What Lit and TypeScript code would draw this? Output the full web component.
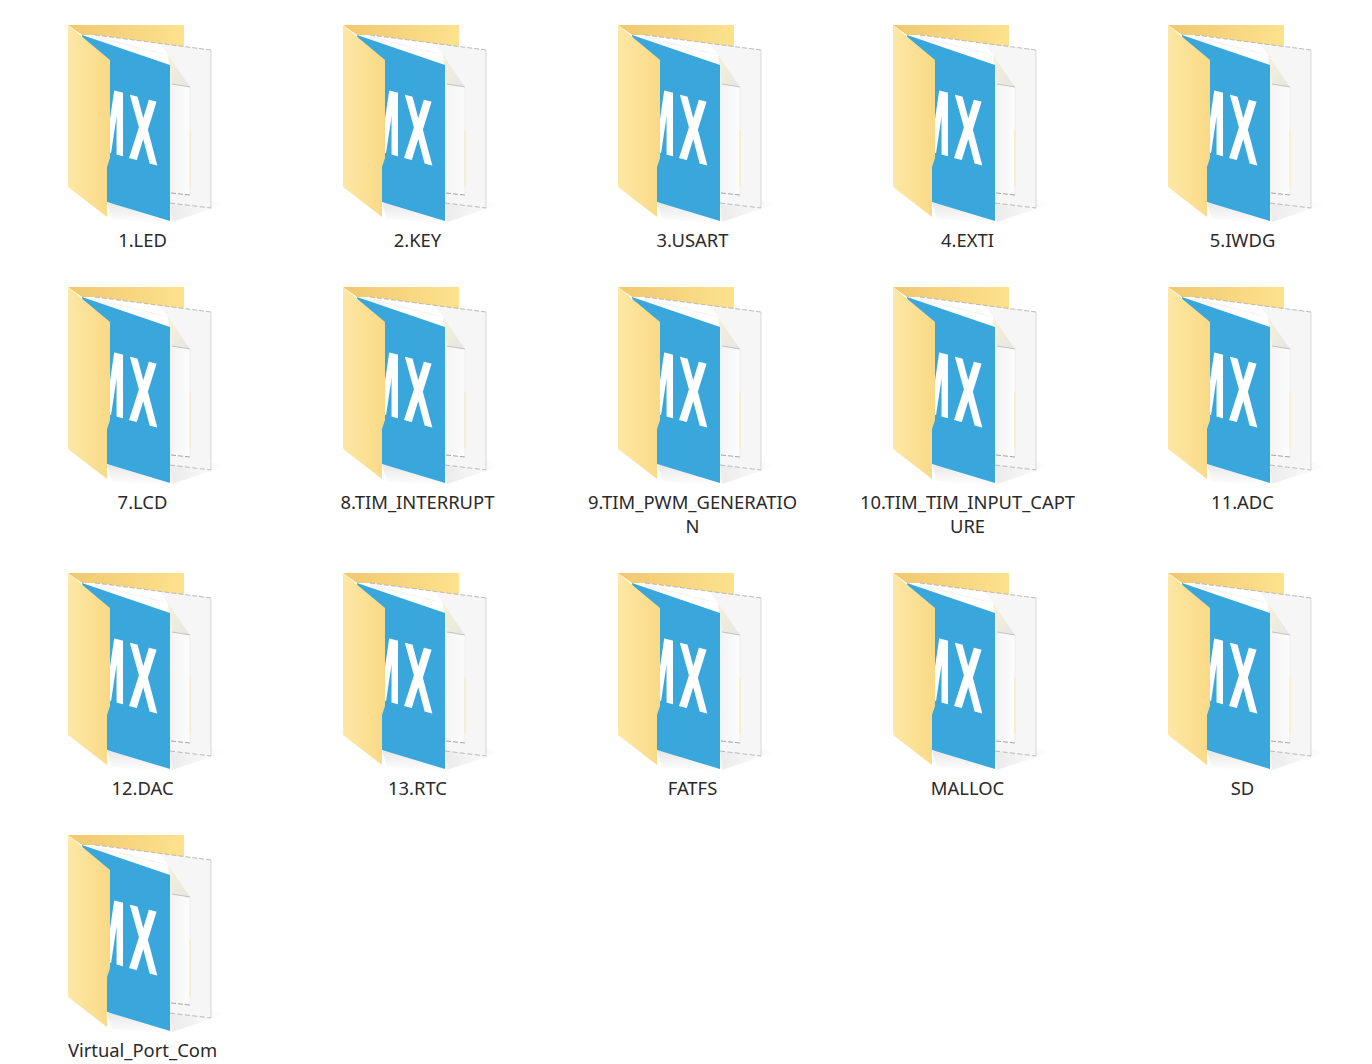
import { LitElement, html, css, svg } from "lit";
import { customElement } from "lit/decorators.js";

const NAMES = [
  "1.LED", "2.KEY", "3.USART", "4.EXTI", "5.IWDG",
  "7.LCD", "8.TIM_INTERRUPT", "9.TIM_PWM_GENERATION", "10.TIM_TIM_INPUT_CAPTURE", "11.ADC",
  "12.DAC", "13.RTC", "FATFS", "MALLOC", "SD",
  "Virtual_Port_Com",
];

const folder = (i: number) => svg`
  <defs>
    <linearGradient id="b${i}" x1="0" x2="1" y1="0" y2="0">
      <stop offset="0" stop-color="#f0c86e"/><stop offset="1" stop-color="#fde28e"/>
    </linearGradient>
    <linearGradient id="f${i}" x1="0" x2="1" y1="0" y2="0">
      <stop offset="0" stop-color="#fee8a6"/><stop offset="1" stop-color="#f9d985"/>
    </linearGradient>
    <linearGradient id="i${i}" x1="0" x2="1" y1="0" y2="0">
      <stop offset="0" stop-color="#e9e9e9"/><stop offset="1" stop-color="#fdfdfd"/>
    </linearGradient>
    <linearGradient id="d${i}" x1="0" x2="1" y1="0" y2="1">
      <stop offset="0" stop-color="#f6f1d8"/><stop offset="1" stop-color="#e6e6e4"/>
    </linearGradient>
    <linearGradient id="s${i}" x1="0" x2="0" y1="0" y2="1">
      <stop offset="0" stop-color="#e8e8e8"/><stop offset="1" stop-color="#ffffff"/>
    </linearGradient>
    <linearGradient id="r${i}" x1="0" x2="1" y1="0" y2="0">
      <stop offset="0" stop-color="#ebebeb"/><stop offset="1" stop-color="#ffffff"/>
    </linearGradient>
    <clipPath id="c${i}"><polygon points="82,35 170,65 170,221 107,202"/></clipPath>
  </defs>
  <polygon points="68,25 184,25 184,47 95,35 82,35" fill="url(#b${i})"/>
  <polygon points="107,203 170,208 170,224 112,219" fill="url(#s${i})"/>
  <polygon points="170,200 211,200 226,204 172,222" fill="url(#r${i})"/>
  <polygon points="95,35 211,50 211,208 170,203 95,190" fill="#f6f6f6"/>
  <polygon points="95,35 160,43.4 168,55 160,53" fill="#fff"/>
  <polyline points="95,35 211,50" fill="none" stroke="#a9a9a9" stroke-width=".8" stroke-dasharray="5 2"/>
  <line x1="211" y1="50" x2="211" y2="208" stroke="#cfcfcf" stroke-width=".8"/>
  <line x1="170" y1="203" x2="211" y2="208" stroke="#a9a9a9" stroke-width=".8" stroke-dasharray="5 2.5"/>
  <polygon points="150,50 168,55 172,84 190,87 190,195 160,192" fill="url(#i${i})"/>
  <polygon points="110,42 168,55 170,84 150,84" fill="#fff"/>
  <polygon points="168,55 190,87 172,84" fill="url(#d${i})"/>
  <line x1="172" y1="84" x2="190" y2="87" stroke="#b5b5b5" stroke-width=".8"/>
  <line x1="190" y1="87" x2="190" y2="195" stroke="#e6e6e6" stroke-width=".7"/>
  <line x1="190" y1="130" x2="190" y2="186" stroke="#f5eeb0" stroke-width="1"/>
  <line x1="171" y1="193" x2="190" y2="195" stroke="#8f8f8f" stroke-width=".8" stroke-dasharray="5 2"/>
  <polygon points="82,35 170,65 170,221 107,202" fill="#3aa7dc"/>
  <g clip-path="url(#c${i})">
    <text class="logo" transform="translate(92,146.5) skewY(15) scale(.45,1)" font-size="88">MX</text>
  </g>
  <polygon points="68,25 110,60 110,158 107,167 107,217 68,187" fill="url(#f${i})"/>
`;

@customElement("app-root")
export class AppRoot extends LitElement {
  static styles = css`
    :host {
      display: block;
      background: #fff;
      height: 1064px;
      overflow: hidden;
    }
    .grid {
      display: grid;
      grid-template-columns: repeat(5, 220px);
      column-gap: 55px;
      row-gap: 30px;
      padding: 20px 0 0 32.5px;
      align-items: start;
    }
    .item {
      display: flex;
      flex-direction: column;
      align-items: center;
    }
    svg {
      display: block;
      width: 175px;
      height: 208px;
    }
    .logo {
      font-family: "Liberation Sans", sans-serif;
      font-weight: 700;
      fill: #fff;
      stroke: #fff;
      stroke-width: 3px;
      letter-spacing: 11px;
    }
    .label {
      width: 218px;
      font-family: "Noto Sans", sans-serif;
      font-size: 18.4px;
      line-height: 24px;
      color: #2a2a2a;
      text-align: center;
      word-break: break-all;
    }
  `;

  render() {
    return html`<div class="grid">
      ${NAMES.map(
        (n, i) => html`<div class="item">
          <svg viewBox="55 20 175 208">${folder(i)}</svg>
          <div class="label">${n}</div>
        </div>`
      )}
    </div>`;
  }
}
